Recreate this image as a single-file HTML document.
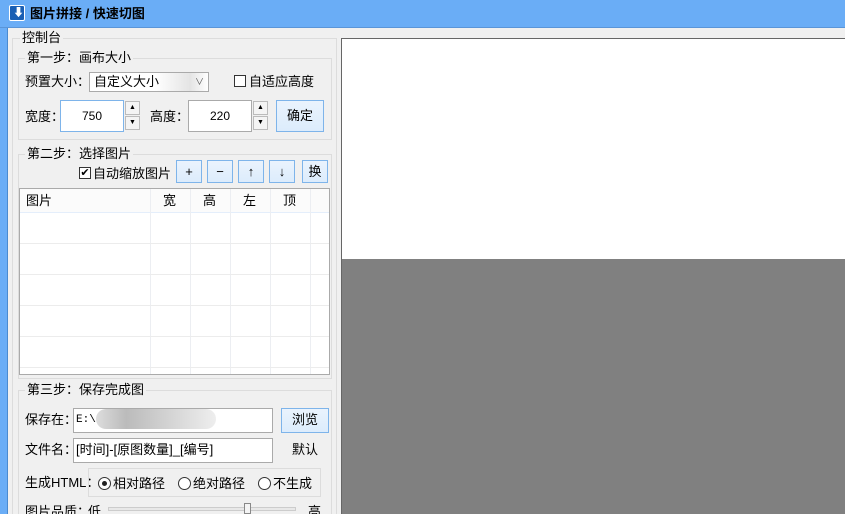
<!DOCTYPE html>
<html style="overflow:hidden;height:514px"><head><meta charset="utf-8"><style>
*{box-sizing:border-box;margin:0;padding:0}
body{width:845px;height:514px;overflow:hidden;background:#f0f0f0;position:relative;font-family:"Liberation Sans","Noto Sans CJK SC",sans-serif;font-size:13px;color:#000}
.a{position:absolute}
.t{position:absolute;white-space:nowrap;line-height:14px}
.grp{position:absolute;border:1px solid #dcdcdc}
.lg{position:absolute;background:#f0f0f0;padding:0 2px;line-height:14px;white-space:nowrap}
.inp{position:absolute;background:#fff;border:1px solid #aaa;line-height:22px;white-space:nowrap}
.btn{position:absolute;background:linear-gradient(#eaf3fd,#dcecfc);border:1px solid #7eb4ea;text-align:center;line-height:22px}
.spin{position:absolute;width:15px;height:14px;border:1px solid #bbb;background:#f4f4f4;font-size:7px;text-align:center;line-height:12px}
.cb{position:absolute;width:12px;height:12px;border:1px solid #333;background:#fff}
.rd{position:absolute;width:13px;height:13px;border:1px solid #333;border-radius:50%;background:#fff}
</style></head><body>
<div class="a" style="left:0;top:0;width:845px;height:28px;background:#6aadf6;border-bottom:1px solid #5a95d8"></div>
<div class="a" style="top:5px;left:9px;width:16px;height:16px;background:#1a5fb4;border-radius:2px;border:1px solid #fff"></div>
<div class="t" style="left:13px;top:6px;color:#fff;font-weight:bold;font-size:11px">⬇</div>
<div class="t" style="left:30px;top:7px;font-weight:bold;font-size:13px">图片拼接 / 快速切图</div>
<div class="a" style="left:0;top:28px;width:8px;height:486px;background:#6aadf6;border-right:1px solid #4a8ad0"></div>

<div class="grp" style="left:12px;top:38px;width:325px;height:490px"></div>
<div class="lg" style="left:20px;top:31px;font-size:13px">控制台</div>

<div class="grp" style="left:18px;top:58px;width:314px;height:82px"></div>
<div class="lg" style="left:25px;top:51px">第一步：画布大小</div>
<div class="t" style="left:25px;top:75px">预置大小：</div>
<div class="inp" style="left:89px;top:72px;width:120px;height:20px;line-height:18px;padding-left:4px;background:linear-gradient(90deg,#fff 55%,#e4e4e4 85%,#fff)">自定义大小<span style="position:absolute;right:4px;color:#555;font-size:9px">∨</span></div>
<div class="cb" style="left:234px;top:75px"></div>
<div class="t" style="left:249px;top:75px">自适应高度</div>
<div class="t" style="left:25px;top:110px">宽度：</div>
<div class="inp" style="left:60px;top:100px;width:64px;height:32px;border-color:#7eb4ea;text-align:center;line-height:30px;font-size:12px">750</div>
<div class="spin" style="left:125px;top:101px">▲</div><div class="spin" style="left:125px;top:116px">▼</div>
<div class="t" style="left:150px;top:110px">高度：</div>
<div class="inp" style="left:188px;top:100px;width:64px;height:32px;text-align:center;line-height:30px;font-size:12px">220</div>
<div class="spin" style="left:253px;top:101px">▲</div><div class="spin" style="left:253px;top:116px">▼</div>
<div class="btn" style="left:276px;top:100px;width:48px;height:32px;line-height:30px">确定</div>

<div class="grp" style="left:18px;top:154px;width:314px;height:225px"></div>
<div class="lg" style="left:25px;top:147px">第二步：选择图片</div>
<div class="cb" style="left:79px;top:167px;font-size:11px;line-height:10px;text-align:center">✔</div>
<div class="t" style="left:93px;top:167px">自动缩放图片</div>
<div class="btn" style="left:176px;top:160px;width:26px;height:23px">+</div>
<div class="btn" style="left:207px;top:160px;width:26px;height:23px">−</div>
<div class="btn" style="left:238px;top:160px;width:26px;height:23px">↑</div>
<div class="btn" style="left:269px;top:160px;width:26px;height:23px">↓</div>
<div class="btn" style="left:302px;top:160px;width:26px;height:23px">换</div>

<div class="a" style="left:19px;top:188px;width:311px;height:187px;background:#fff;border:1px solid #aaa;overflow:hidden">
<div class="a" style="left:0;top:0;width:310px;height:24px;background:#fbfbfb;border-bottom:1px solid #e4eefb"></div>
<div class="t" style="left:6px;top:5px">图片</div>
<div class="t" style="left:143px;top:5px">宽</div>
<div class="t" style="left:183px;top:5px">高</div>
<div class="t" style="left:223px;top:5px">左</div>
<div class="t" style="left:263px;top:5px">顶</div>
<div class="a" style="left:130px;top:0;width:1px;height:190px;background:#eceef2"></div>
<div class="a" style="left:170px;top:0;width:1px;height:190px;background:#eceef2"></div>
<div class="a" style="left:210px;top:0;width:1px;height:190px;background:#eceef2"></div>
<div class="a" style="left:250px;top:0;width:1px;height:190px;background:#eceef2"></div>
<div class="a" style="left:290px;top:0;width:1px;height:190px;background:#eceef2"></div>
<div class="a" style="left:0;top:54px;width:310px;height:1px;background:#ececec"></div>
<div class="a" style="left:0;top:85px;width:310px;height:1px;background:#ececec"></div>
<div class="a" style="left:0;top:116px;width:310px;height:1px;background:#ececec"></div>
<div class="a" style="left:0;top:147px;width:310px;height:1px;background:#ececec"></div>
<div class="a" style="left:0;top:178px;width:310px;height:1px;background:#ececec"></div>
</div>

<div class="grp" style="left:18px;top:390px;width:314px;height:140px"></div>
<div class="lg" style="left:25px;top:383px">第三步：保存完成图</div>
<div class="t" style="left:25px;top:413px">保存在：</div>
<div class="inp" style="left:73px;top:408px;width:200px;height:25px;padding-left:2px;font-family:'Liberation Mono',monospace;font-size:11px">E:\<span style="display:inline-block;vertical-align:middle;width:120px;height:20px;background:linear-gradient(90deg,#ddd,#bbb,#ccc,#ddd,#eee);border-radius:10px"></span></div>
<div class="btn" style="left:281px;top:408px;width:48px;height:25px">浏览</div>
<div class="t" style="left:25px;top:443px">文件名：</div>
<div class="inp" style="left:73px;top:438px;width:200px;height:25px;padding-left:2px">[时间]-[原图数量]_[编号]</div>
<div class="t" style="left:292px;top:443px">默认</div>
<div class="t" style="left:25px;top:476px">生成HTML：</div>
<div class="grp" style="left:88px;top:468px;width:233px;height:29px"></div>
<div class="rd" style="left:98px;top:477px"><div class="a" style="left:3px;top:3px;width:5px;height:5px;border-radius:50%;background:#222"></div></div>
<div class="t" style="left:113px;top:477px">相对路径</div>
<div class="rd" style="left:178px;top:477px"></div>
<div class="t" style="left:193px;top:477px">绝对路径</div>
<div class="rd" style="left:258px;top:477px"></div>
<div class="t" style="left:273px;top:477px">不生成</div>
<div class="t" style="left:25px;top:505px">图片品质：</div>
<div class="t" style="left:88px;top:505px">低</div>
<div class="a" style="left:108px;top:507px;width:188px;height:4px;border:1px solid #ccc;background:#e8e8e8"></div>
<div class="a" style="left:244px;top:503px;width:7px;height:11px;border:1px solid #888;background:#f4f4f4"></div>
<div class="t" style="left:308px;top:505px">高</div>

<div class="a" style="left:341px;top:38px;width:504px;height:476px;background:#808080;border-left:1px solid #666;border-top:1px solid #666"></div>
<div class="a" style="left:342px;top:39px;width:503px;height:220px;background:#fff"></div>
</body></html>
